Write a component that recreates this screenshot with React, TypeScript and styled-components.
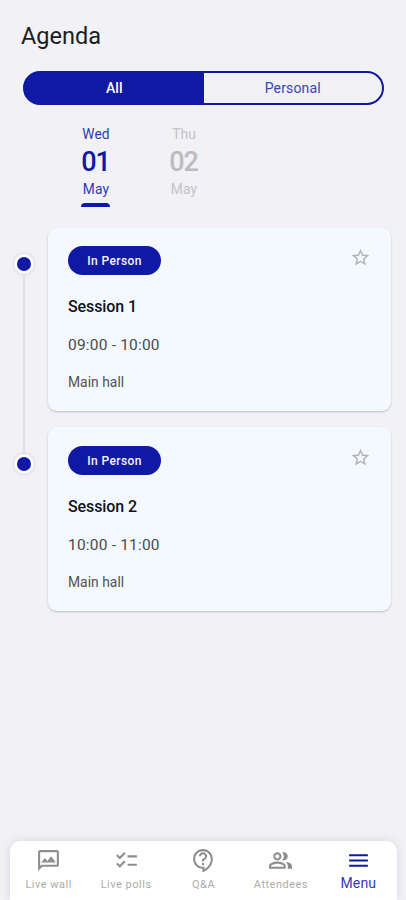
import React from "react";
import styled, { createGlobalStyle } from "styled-components";
import {
  MdChecklist,
  MdMenu,
  MdOutlineContactSupport,
  MdOutlineMms,
  MdOutlinePeopleAlt,
  MdStarBorder,
} from "react-icons/md";

const navy = "#1019a3";

const GlobalStyle = createGlobalStyle`
  * { box-sizing: border-box; }
  body { margin: 0; background: #f1f1f6; font-family: Roboto, sans-serif; }
`;

const Screen = styled.div`
  width: 100%;
  height: 900px;
  display: flex;
  flex-direction: column;
  overflow: hidden;
  background: #f1f1f6;
`;

const Title = styled.h1`
  margin: 21px 0 0 21px;
  font-size: 23.5px;
  line-height: 30px;
  font-weight: 400;
  letter-spacing: 0;
  color: #1c1c1f;
`;

const Segments = styled.div`
  display: flex;
  height: 34px;
  margin: 19.5px 22px 0 23px;
  border: 2px solid ${navy};
  border-radius: 17px;
  overflow: hidden;
  background: linear-gradient(to right, ${navy} 50%, transparent 50%) border-box;
`;

const Segment = styled.button<{ $active?: boolean }>`
  flex: 1;
  padding: 0;
  border: 0;
  font: ${(p) => (p.$active ? 500 : 400)} 14px Roboto, sans-serif;
  letter-spacing: ${(p) => (p.$active ? 0 : 0.15)}px;
  color: ${(p) => (p.$active ? "#fff" : "#3d44b2")};
  background: transparent;
`;

const Days = styled.div`
  display: flex;
  gap: 28px;
  margin: 19.5px 0 0 66px;
`;

const Day = styled.div<{ $active?: boolean }>`
  display: flex;
  flex-direction: column;
  align-items: center;
  width: 60px;
  height: 83px;
  color: ${(p) => (p.$active ? navy : "#bcbcc0")};
`;

const DayWord = styled.span`
  font-size: 13.8px;
  line-height: 20px;
  letter-spacing: 0.1px;
  opacity: 0.86;
`;

const DayNumber = styled.span`
  height: 35px;
  font-size: 27px;
  line-height: 37px;
  font-weight: 500;
  letter-spacing: -1.1px;
  padding-right: 1px;
`;

const Underline = styled.span`
  width: 29px;
  height: 4px;
  margin: 4px 1px 0 0;
  border-radius: 4px 4px 0 0;
  background: ${navy};
`;

const Timeline = styled.div`
  display: flex;
  padding-right: 15px;
  margin-top: 20.5px;
`;

const Rail = styled.div`
  width: 48px;
  display: flex;
  flex-direction: column;
  align-items: center;
  padding-top: 26.5px;
`;

const Dot = styled.span`
  width: 20px;
  height: 20px;
  border: 3px solid #fff;
  border-radius: 50%;
  background: ${navy};
  box-shadow: 0 0 3px #c4c4cc;
`;

const Connector = styled.span`
  width: 2px;
  height: 179.5px;
  background: #dfdfe4;
`;

const Cards = styled.div`
  flex: 1;
  display: flex;
  flex-direction: column;
  gap: 16px;
`;

const Card = styled.article`
  height: 183.5px;
  padding: 18.5px 20px 0 20px;
  border-radius: 9px;
  background: #f4f9ff;
  box-shadow: 0 1px 2px rgba(70, 75, 90, 0.3);
`;

const CardTop = styled.div`
  display: flex;
  justify-content: space-between;
  align-items: flex-start;
`;

const Badge = styled.span`
  width: 93px;
  height: 29px;
  border-radius: 15px;
  background: ${navy};
  color: #f4f4ff;
  font-size: 12px;
  font-weight: 500;
  line-height: 30px;
  letter-spacing: 0.4px;
  text-align: center;
`;

const Favourite = styled(MdStarBorder)`
  width: 21px;
  height: 21px;
  margin-top: 1px;
  color: #b0b2b6;
`;

const SessionName = styled.h2`
  margin: 20px 0 0;
  font-size: 16px;
  line-height: 24px;
  font-weight: 500;
  letter-spacing: -0.1px;
  color: #101114;
`;

const Time = styled.div`
  margin-top: 15px;
  font-size: 15.5px;
  line-height: 22px;
  letter-spacing: 0.2px;
  color: #48494c;
`;

const Place = styled.div`
  margin-top: 16px;
  font-size: 13.8px;
  line-height: 20px;
  letter-spacing: 0.05px;
  color: #505154;
`;

const NavBar = styled.nav`
  display: flex;
  height: 59px;
  margin: auto 9px 0 10px;
  border-radius: 10px 10px 0 0;
  background: #fff;
  box-shadow: 0 0 10px rgba(60, 60, 80, 0.15);
`;

const NavItem = styled.a<{ $active?: boolean }>`
  flex: 1;
  display: flex;
  flex-direction: column;
  align-items: center;
  padding-top: 7px;
  color: ${(p) => (p.$active ? navy : "#8e8e8e")};
  svg {
    width: 25px;
    height: 25px;
  }
`;

const NavLabel = styled.span<{ $active?: boolean }>`
  margin-top: ${(p) => (p.$active ? 2 : 3)}px;
  font-size: ${(p) => (p.$active ? 14 : 11)}px;
  line-height: 17px;
  letter-spacing: ${(p) => (p.$active ? 0.2 : 0.5)}px;
  white-space: nowrap;
  color: ${(p) => (p.$active ? "#343bae" : "#acacac")};
`;

const sessions = [
  { name: "Session 1", time: "09:00 - 10:00", place: "Main hall" },
  { name: "Session 2", time: "10:00 - 11:00", place: "Main hall" },
];

const navItems = [
  { label: "Live wall", Icon: MdOutlineMms },
  { label: "Live polls", Icon: MdChecklist },
  { label: "Q&A", Icon: MdOutlineContactSupport },
  { label: "Attendees", Icon: MdOutlinePeopleAlt },
  { label: "Menu", Icon: MdMenu, active: true },
];

export default function App() {
  return (
    <>
      <GlobalStyle />
      <Screen>
        <Title>Agenda</Title>
        <Segments>
          <Segment $active>All</Segment>
          <Segment>Personal</Segment>
        </Segments>
        <Days>
          <Day $active>
            <DayWord>Wed</DayWord>
            <DayNumber>01</DayNumber>
            <DayWord>May</DayWord>
            <Underline />
          </Day>
          <Day>
            <DayWord>Thu</DayWord>
            <DayNumber>02</DayNumber>
            <DayWord>May</DayWord>
          </Day>
        </Days>
        <Timeline>
          <Rail>
            <Dot />
            <Connector />
            <Dot />
          </Rail>
          <Cards>
            {sessions.map((s) => (
              <Card key={s.name}>
                <CardTop>
                  <Badge>In Person</Badge>
                  <Favourite />
                </CardTop>
                <SessionName>{s.name}</SessionName>
                <Time>{s.time}</Time>
                <Place>{s.place}</Place>
              </Card>
            ))}
          </Cards>
        </Timeline>
        <NavBar>
          {navItems.map(({ label, Icon, active }) => (
            <NavItem key={label} $active={active}>
              <Icon />
              <NavLabel $active={active}>{label}</NavLabel>
            </NavItem>
          ))}
        </NavBar>
      </Screen>
    </>
  );
}
